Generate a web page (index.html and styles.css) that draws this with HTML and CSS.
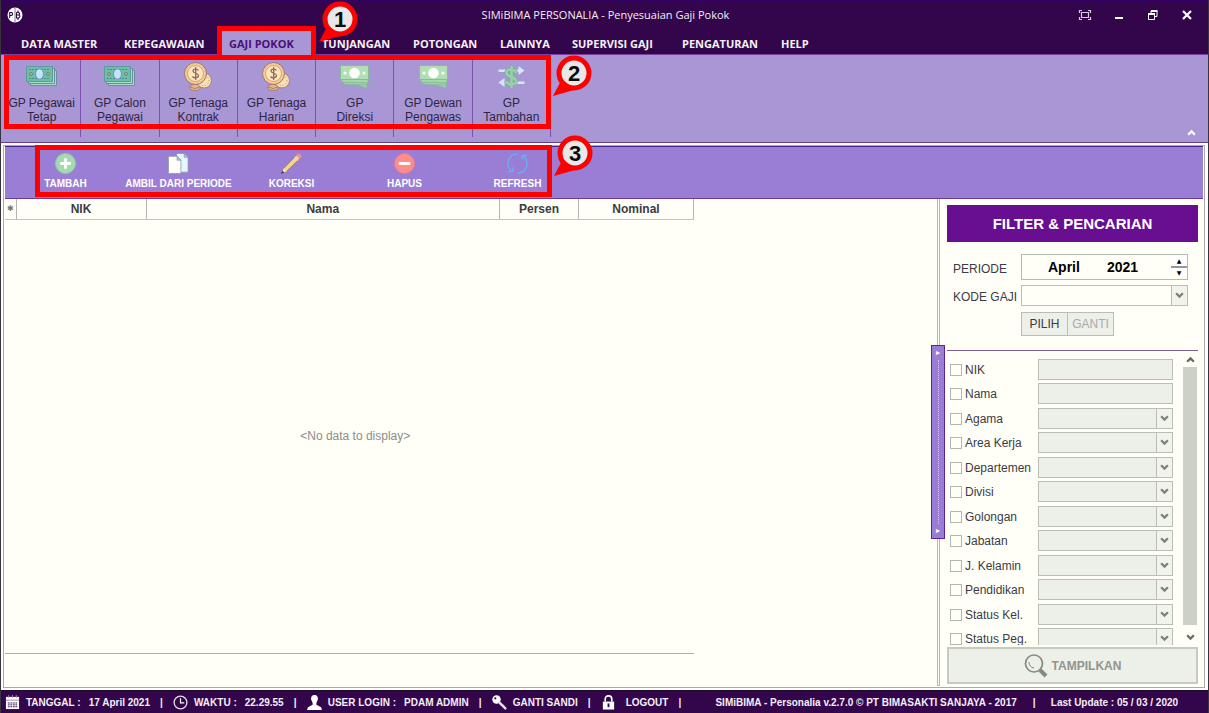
FILE: index.html
```html
<!DOCTYPE html>
<html lang="id">
<head>
<meta charset="utf-8">
<title>SIMiBIMA PERSONALIA - Penyesuaian Gaji Pokok</title>
<link rel="stylesheet" href="styles.css">
</head>
<body>
<svg class="defs" aria-hidden="true">
  <symbol id="chev" viewBox="0 0 8 6"><path d="M1 1l3 3 3-3" fill="none" stroke="currentColor" stroke-width="2"/></symbol>
  <symbol id="callout" viewBox="0 0 42 44"><path d="M1 42 10 25 22 36z" fill="#fe0000"/><circle cx="22" cy="19" r="15" fill="#e8e8e8" stroke="#fe0000" stroke-width="5"/><path d="M7 36 12 27 17 33z" fill="#fe0000"/></symbol>
  <symbol id="notes" viewBox="0 0 31 21">
    <g stroke="#6c8fa0" stroke-width="1"><path d="M4.500 4.500h26v15h-26z" fill="#a5dcc8"/><path d="M2.500 2.500h26v15h-26z" fill="#a5dcc8"/><path d="M.500.500h26v15h-26z" fill="#6bbfa9" stroke="#5f9c9f"/></g>
    <path d="M3 3.500h21M3 12.500h21" stroke="#4a8f90" stroke-dasharray="2 1"/>
    <ellipse cx="13.500" cy="8" rx="4" ry="5.200" fill="#c5e3fb" stroke="#7590bd"/>
    <circle cx="5" cy="8" r="1.500" fill="#e0ad77" stroke="#70807f"/><circle cx="22" cy="8" r="1.500" fill="#e0ad77" stroke="#70807f"/>
  </symbol>
  <symbol id="coins" viewBox="0 0 28 29">
    <ellipse cx="11" cy="25.500" rx="5.500" ry="3" fill="#e9bb86" stroke="#a87a74"/><path d="M6 25q5 3 10 0" fill="none" stroke="#a87a74"/>
    <circle cx="20" cy="18.500" r="7.500" fill="#fbe0b3" stroke="#a87a80"/><circle cx="20" cy="18.500" r="5" fill="none" stroke="#b68c79" stroke-dasharray="1 2"/>
    <circle cx="11.500" cy="11.500" r="11" fill="#f4cc91" stroke="#a0727e"/><circle cx="11.500" cy="11.500" r="8" fill="#fde6bd" stroke="#d6a376"/>
    <path d="M14.500 8.500c-1-2-5.500-2-5.500.500s5.500 2 5.500 4.500-4.500 3-6 1M11.700 5v13" fill="none" stroke="#94675f" stroke-width="1.300"/>
  </symbol>
  <symbol id="cash" viewBox="0 0 29 24">
    <g fill="#a6d8ad" stroke="#86bb98"><path d="M7 17l20-4v10z"/><path d="M3 14l24-3v9l-23-1z"/><path d="M1 11h27v7l-26-1z"/><path d="M.500.500h28v14h-28z" fill="#b0dfb6"/></g>
    <circle cx="14.500" cy="8" r="5.300" fill="#fffef8"/><circle cx="5" cy="8" r="1.600" fill="#fffef8"/><circle cx="24" cy="8" r="1.600" fill="#fffef8"/>
  </symbol>
  <symbol id="transfer" viewBox="0 0 28 24">
    <path d="M1 4.500h20V1l6 4.500-6 4.500V7H1zM27 16.500H7V13l-6 4.500L7 22v-3h20z" fill="#d3e8f7"/>
    <path d="M18.500 8c-1-5-10-4.500-9.500 0s9.500 3.500 9.500 8-9 4.500-10 0M14 1v22" fill="none" stroke="#7fa5a0" stroke-width="4"/><path d="M18.500 8c-1-5-10-4.500-9.500 0s9.500 3.500 9.500 8-9 4.500-10 0M14 1v22" fill="none" stroke="#95d3a6" stroke-width="2.600"/>
  </symbol>
</svg>

<header class="titlebar">
  <svg class="logo" viewBox="0 0 16 16"><circle cx="8" cy="8" r="7.500" fill="#fff"/><path d="M8 1v14" stroke="#8d72a0"/><path d="M2.700 11V5.500h2q1.700 1.500 0 3h-2M9.500 5.500v5.500h2q2.500-1.500.500-3H9.500M9.500 5.500h2q2 1 .500 2.500M11 3.500v2M11 11v2" fill="none" stroke="#33064b" stroke-width="1.100"/></svg>
  <h1>SIMiBIMA PERSONALIA - Penyesuaian Gaji Pokok</h1>
  <div class="winbtns">
    <button aria-label="Layar penuh"><svg viewBox="0 0 14 12"><path d="M4 1.500H1.500V4M10 1.500h2.500V4M4 10.500H1.500V8M10 10.500h2.500V8M3.500 3.500h7v5h-7z" fill="none" stroke="#d9c9e2" stroke-width="1.200"/></svg></button>
    <button aria-label="Kecilkan"><svg viewBox="0 0 14 12"><path d="M3 9h8" stroke="#fff" stroke-width="2"/></svg></button>
    <button aria-label="Pulihkan"><svg viewBox="0 0 14 12"><path d="M5 4V2h6v5.500h-2M2.500 5h6v5.500h-6z" fill="none" stroke="#fff"/><path d="M2 5h7M5 2h6.500" stroke="#fff" stroke-width="2"/></svg></button>
    <button aria-label="Tutup"><svg viewBox="0 0 14 12"><path d="M3 2l8 8M11 2l-8 8" stroke="#fff" stroke-width="2.200"/></svg></button>
  </div>
</header>

<nav class="menu">
  <a href="#">DATA MASTER</a>
  <a href="#">KEPEGAWAIAN</a>
  <a href="#" class="active">GAJI POKOK<svg class="callout c1" viewBox="0 0 42 44"><use href="#callout"/><text x="22" y="27">1</text></svg></a>
  <a href="#">TUNJANGAN</a>
  <a href="#">POTONGAN</a>
  <a href="#">LAINNYA</a>
  <a href="#">SUPERVISI GAJI</a>
  <a href="#">PENGATURAN</a>
  <a href="#">HELP</a>
</nav>

<section class="ribbon">
  <div class="ribbon-items">
    <button><svg class="i-notes"><use href="#notes"/></svg><span>GP Pegawai<br>Tetap</span></button>
    <button><svg class="i-notes"><use href="#notes"/></svg><span>GP Calon<br>Pegawai</span></button>
    <button><svg class="i-coins"><use href="#coins"/></svg><span>GP Tenaga<br>Kontrak</span></button>
    <button><svg class="i-coins"><use href="#coins"/></svg><span>GP Tenaga<br>Harian</span></button>
    <button><svg class="i-cash"><use href="#cash"/></svg><span>GP<br>Direksi</span></button>
    <button><svg class="i-cash"><use href="#cash"/></svg><span>GP Dewan<br>Pengawas</span></button>
    <button><svg class="i-cash"><use href="#transfer"/></svg><span>GP<br>Tambahan</span></button>
    <svg class="callout c2" viewBox="0 0 42 44"><use href="#callout"/><text x="22" y="27">2</text></svg>
  </div>
  <button class="collapse" aria-label="Ciutkan pita"><svg viewBox="0 0 8 6"><path d="M1 5l3-3 3 3" fill="none" stroke="#fff" stroke-width="2"/></svg></button>
</section>

<main class="window">
  <div class="toolbar">
    <div class="tools">
      <button><svg viewBox="0 0 24 24"><circle cx="12" cy="12" r="10.500" fill="#a5dab1" stroke="#90c6a5"/><path d="M12 6.500v11M6.500 12h11" stroke="#fff" stroke-width="3"/></svg><span>TAMBAH</span></button>
      <button><svg viewBox="0 0 24 24"><g stroke="#8797a6" stroke-width=".800"><path d="M10 1.500h8l4 4V21H10z" fill="#e7f5fd"/><path d="M18 1.500v4h4z" fill="#9ed5ea"/><path d="M1.500 4.500h9l4 4V22.500h-13z" fill="#fffef8"/><path d="M10.500 4.500v4h4z" fill="#9ed5ea"/></g></svg><span>AMBIL DARI PERIODE</span></button>
      <button><svg viewBox="0 0 24 24"><path d="M2 22l2-5L17.500 3l3.500 3.500L7 20z" fill="#f5d48b" stroke="#9d7755" stroke-width=".800"/><path d="M4 17l3 3-5 2z" fill="#f7e5c8"/><path d="M2.500 19.500l2 2-3.500 1.500z" fill="#473543"/><path d="M17 3.500l1.500-2q3.500-.500 4 3.500L20.500 7z" fill="#f0908f"/><path d="M15.500 5l3.500 3.500" stroke="#cfdcec" stroke-width="1.500"/></svg><span>KOREKSI</span></button>
      <button><svg viewBox="0 0 24 24"><circle cx="12" cy="12" r="10.500" fill="#ff8c8c" stroke="#e8798d"/><path d="M6 12h12" stroke="#fff" stroke-width="3"/></svg><span>HAPUS</span></button>
      <button><svg viewBox="0 0 24 24"><path d="M12.500 2C5 2 2 7 2 12q0 5 4.500 8.500M2 20.500h5V16M11.500 22C19 22 22 17 22 12q0-5-4.500-8.500M22 3.500h-5V8" fill="none" stroke="#69aef5" stroke-width="1.500"/></svg><span>REFRESH</span></button>
      <svg class="callout c3" viewBox="0 0 42 44"><use href="#callout"/><text x="22" y="27">3</text></svg>
    </div>
  </div>
  <div class="content">
    <section class="grid-area">
      <table>
        <colgroup><col class="w-mark"><col class="w-nik"><col><col class="w-persen"><col class="w-nominal"></colgroup>
        <thead><tr><th class="mark">✱</th><th>NIK</th><th>Nama</th><th>Persen</th><th>Nominal</th></tr></thead>
        <tbody><tr><td colspan="5">&lt;No data to display&gt;</td></tr></tbody>
      </table>
    </section>
    <div class="splitter"><button aria-label="Sembunyikan filter"><i>▸</i><b></b><i>▸</i></button></div>
    <aside class="filter">
      <h2>FILTER &amp; PENCARIAN</h2>
      <div class="period">
        <label for="bulan">PERIODE</label>
        <div class="spin"><input id="bulan" value="April"><input aria-label="Tahun" class="year" value="2021"><span class="arrows"><button aria-label="Naik">▲</button><button aria-label="Turun">▼</button></span></div>
        <label for="kode">KODE GAJI</label>
        <div class="combo open"><select id="kode"><option></option></select><svg><use href="#chev"/></svg></div>
        <div class="pair"><button>PILIH</button><button disabled>GANTI</button></div>
      </div>
      <div class="scroller">
        <ul>
          <li><input type="checkbox" id="c1"><label for="c1">NIK</label><input class="field" aria-label="NIK" disabled></li>
          <li><input type="checkbox" id="c2"><label for="c2">Nama</label><input class="field" aria-label="Nama" disabled></li>
          <li><input type="checkbox" id="c3"><label for="c3">Agama</label><div class="combo"><select aria-label="Agama" disabled></select><svg><use href="#chev"/></svg></div></li>
          <li><input type="checkbox" id="c4"><label for="c4">Area Kerja</label><div class="combo"><select aria-label="Area Kerja" disabled></select><svg><use href="#chev"/></svg></div></li>
          <li><input type="checkbox" id="c5"><label for="c5">Departemen</label><div class="combo"><select aria-label="Departemen" disabled></select><svg><use href="#chev"/></svg></div></li>
          <li><input type="checkbox" id="c6"><label for="c6">Divisi</label><div class="combo"><select aria-label="Divisi" disabled></select><svg><use href="#chev"/></svg></div></li>
          <li><input type="checkbox" id="c7"><label for="c7">Golongan</label><div class="combo"><select aria-label="Golongan" disabled></select><svg><use href="#chev"/></svg></div></li>
          <li><input type="checkbox" id="c8"><label for="c8">Jabatan</label><div class="combo"><select aria-label="Jabatan" disabled></select><svg><use href="#chev"/></svg></div></li>
          <li><input type="checkbox" id="c9"><label for="c9">J. Kelamin</label><div class="combo"><select aria-label="J. Kelamin" disabled></select><svg><use href="#chev"/></svg></div></li>
          <li><input type="checkbox" id="c10"><label for="c10">Pendidikan</label><div class="combo"><select aria-label="Pendidikan" disabled></select><svg><use href="#chev"/></svg></div></li>
          <li><input type="checkbox" id="c11"><label for="c11">Status Kel.</label><div class="combo"><select aria-label="Status Kel." disabled></select><svg><use href="#chev"/></svg></div></li>
          <li><input type="checkbox" id="c12"><label for="c12">Status Peg.</label><div class="combo"><select aria-label="Status Peg." disabled></select><svg><use href="#chev"/></svg></div></li>
        </ul>
        <div class="scrollbar"><svg class="up"><use href="#chev"/></svg><span></span><svg><use href="#chev"/></svg></div>
      </div>
      <button class="show" disabled><svg viewBox="0 0 24 24"><circle cx="10" cy="9.500" r="8.500" fill="none" stroke="#858a80" stroke-width="1.700"/><path d="M5 8q0 5 5 6" fill="none" stroke="#858a80"/><path d="M16 16l6 6" stroke="#858a80" stroke-width="4"/></svg>TAMPILKAN</button>
    </aside>
  </div>
</main>

<footer class="status">
  <span class="s s-date"><svg viewBox="0 0 16 16"><path d="M1 2h14v13H1z" fill="#fff"/><path d="M1 5.500h14M4 0v3M8 0v3M12 0v3" stroke="#9b86a6"/><path d="M3 8.500h10M3 10.500h10M3 12.500h10" stroke="#33064b" stroke-dasharray="2 .700"/></svg>TANGGAL :<span>17 April 2021</span></span><i>|</i>
  <span class="s s-time"><svg viewBox="0 0 16 16"><circle cx="8" cy="8" r="6.800" fill="none" stroke="#e6dcea" stroke-width="1.400"/><path d="M8 3.500V8.500h4" fill="none" stroke="#fff" stroke-width="1.300"/></svg>WAKTU :<span>22.29.55</span></span><i>|</i>
  <span class="s s-user"><svg viewBox="0 0 16 16"><path d="M8 0c3 0 4 2.500 3.500 5L10 8.500v2l5 2.500 1 3H0l1-3 5-2.500v-2L4.500 5C4 2.500 5 0 8 0z" fill="#fff"/></svg>USER LOGIN :<span>PDAM ADMIN</span></span><i>|</i>
  <a href="#" class="s s-key"><svg viewBox="0 0 16 16"><circle cx="4.800" cy="4.800" r="4.500" fill="#fff"/><circle cx="3.500" cy="3.500" r="1.200" fill="#33064b"/><path d="M7 7l8 8M11 13l2-2M8.500 10.500l1.500-1.500" stroke="#e8dff0" stroke-width="2.500"/></svg>GANTI SANDI</a><i>|</i>
  <a href="#" class="s s-lock"><svg viewBox="0 0 16 16"><path d="M4.500 7V4.500q0-3.500 3.500-3.500t3.500 3.500V7" fill="none" stroke="#fff" stroke-width="1.800"/><path d="M2 7h12v8.500H2z" fill="#fff"/><path d="M8 9v4" stroke="#33064b" stroke-width="2"/></svg>LOGOUT</a><i>|</i>
  <span class="about">SIMiBIMA - Personalia v.2.7.0 © PT BIMASAKTI SANJAYA - 2017</span><i>|</i>
  <span class="upd">Last Update : 05 / 03 / 2020</span>
</footer>
</body>
</html>
```
FILE: styles.css
```css
* { box-sizing: border-box; }
body {
  margin: 0;
  min-height: 100vh;
  display: flex;
  flex-direction: column;
  font-family: "Liberation Sans", Arial, sans-serif;
  font-size: 12px;
  color: #3c3b44;
  background: #fff;
  border-left: 1px solid #39333d;
  border-right: 1px solid #39333d;
}
button, input, select { font: inherit; color: inherit; margin: 0; padding: 0; border: 0; background: none; border-radius: 0; }
a { color: inherit; text-decoration: none; }
.defs { position: absolute; width: 0; height: 0; }

.titlebar {
  display: grid;
  grid-template-columns: 1fr auto 1fr;
  align-items: center;
  height: 28px;
  padding: 0 14px 0 6px;
  background: #33064b;
  border-top: 1px solid #320065;
  color: #f3ecf6;
}
.logo { width: 16px; height: 16px; }
.titlebar h1 { margin: 0 0 0 10px; font: 11px/16px "Open Sans", "Noto Sans", sans-serif; }
.winbtns { display: flex; justify-content: flex-end; gap: 20px; }
.winbtns button { width: 14px; height: 12px; display: flex; }
.winbtns svg { width: 14px; height: 12px; }

.menu {
  display: grid;
  grid-template-columns: 103px 105px 93px 91px 87px 72px 110px 99px 60px;
  height: 26px;
  padding-left: 20px;
  background: #33064b;
  color: #f6f0f8;
  font: bold 11px/32px "Open Sans", "Noto Sans", sans-serif;
  white-space: nowrap;
}
.menu a { position: relative; z-index: 2; }
.menu .active { z-index: 3; color: #4a1178; }
.menu .active::before {
  content: "";
  position: absolute;
  z-index: -1;
  inset: -2px 6px 0 -12px;
  border: 5px solid #fe0000;
  background: #a996d5;
}
.callout { position: absolute; z-index: 4; width: 42px; height: 44px; }
.callout text { font: bold 22px "Liberation Sans", Arial, sans-serif; text-anchor: middle; fill: #0c0c0c; }
.c1 { left: 89px; top: -28px; }
.c2 { right: -43px; top: -1px; }
.c3 { right: -43px; top: -13px; }

.ribbon {
  display: flex;
  justify-content: space-between;
  height: 89px;
  background: #a996d5;
  border-top: 1px solid #7a3f9f;
  border-bottom: 1px solid #61408a;
}
.ribbon-items {
  position: relative;
  display: grid;
  grid-template-columns: repeat(7, 1fr);
  width: 549px;
  margin: 0 0 5px 1px;
  padding-left: 1px;
}
.ribbon-items::before {
  content: "";
  position: absolute;
  inset: 0 0 8px 2px;
  border: 5px solid #fe0000;
}
.ribbon-items button {
  display: grid;
  grid-template-rows: 39px auto;
  align-content: start;
  justify-items: center;
  align-items: center;
  padding-top: 2px;
  border-right: 1px solid #7c4fb0;
  line-height: 14px;
  color: #2f2540;
}
.i-notes { width: 31px; height: 21px; }
.i-coins { width: 28px; height: 29px; }
.i-cash { width: 29px; height: 24px; }
.collapse { align-self: flex-end; margin: 0 12px 5px 0; height: 8px; display: flex; }
.collapse svg { width: 9px; height: 7px; }

.window {
  flex: 1;
  display: flex;
  flex-direction: column;
  margin: 2px 3px 2px 2px;
  border: 1px solid #a9aaa5;
  background: #fffff7;
}
.toolbar {
  height: 53px;
  margin: 0 1px;
  background: #9a7dd4;
  border-top: 1px solid #4d1f87;
  border-bottom: 1px solid #6a3b9d;
}
.tools {
  position: relative;
  display: grid;
  grid-template-columns: repeat(5, 113px);
  width: 547px;
  padding-left: 4px;
  height: 50px;
}
.tools::before { content: ""; position: absolute; inset: -2px 0 0 30px; border: 5px solid #fe0000; }
.tools button {
  display: flex;
  flex-direction: column;
  align-items: center;
  padding-top: 5px;
  color: #fff;
  font-weight: bold;
  font-size: 10px;
  line-height: 14px;
  white-space: nowrap;
}
.tools button svg { width: 23px; height: 23px; margin-bottom: 2px; }

.content { flex: 1; display: flex; }
.grid-area { flex: 1; display: flex; padding: 0 237px 33px 1px; }
.grid-area table {
  flex: 1;
  table-layout: fixed;
  border-collapse: collapse;
  border-bottom: 1px solid #b0b0aa;
}
.w-mark { width: 11px; }
.w-nik { width: 130px; }
.w-persen { width: 79px; }
.w-nominal { width: 115px; }
th { height: 20px; padding: 0; border-right: 1px solid #b4b5b0; border-bottom: 1px solid #c2c3bd; }
.mark { font: 8px "DejaVu Sans", sans-serif; color: #77776f; }
td { padding: 0 0 0 12px; text-align: center; color: #8c8c8c; }

.splitter { display: flex; align-items: center; width: 14px; flex: none; position: relative; padding-bottom: 3px; }
.splitter::before { content: ""; position: absolute; inset: 0 5px 1px 6px; border: 1px solid #b8b8b2; border-top: 0; }
.splitter button {
  position: relative;
  width: 14px;
  height: 194px;
  display: flex;
  flex-direction: column;
  align-items: center;
  background: #9a7dd4;
  border: 1px solid #5b2591;
  color: #fff;
}
.splitter i { font: 8px/14px "DejaVu Sans", sans-serif; }
.splitter b { flex: 1; border-left: 1px dotted #d5c8ee; }

.filter { width: 251px; flex: none; display: flex; flex-direction: column; margin: 6px 6px 3px 2px; }
.filter h2 { margin: 0; background: #670e91; color: #fff; text-align: center; font-size: 15px; line-height: 37px; }
.period {
  display: grid;
  grid-template-columns: 68px 167px;
  row-gap: 5px;
  padding: 12px 0 14px 6px;
  border-bottom: 1px solid #7d5f92;
  align-items: center;
}
.period label { white-space: nowrap; padding-top: 3px; }
.spin { display: flex; align-items: center; height: 26px; border: 1px solid #b6bbb0; font-weight: bold; font-size: 14px; color: #000; }
.spin input { width: 60px; padding-left: 26px; height: 20px; }
.spin .year { padding-left: 25px; width: 70px; }
.arrows { display: grid; gap: 2px; margin-left: auto; width: 16px; background: #989890; }
.arrows button { height: 10px; font: 6px/10px "DejaVu Sans", sans-serif; background: #fff; }
.combo { position: relative; height: 21px; }
.combo select { appearance: none; width: 100%; height: 100%; border: 1px solid #b9bfb4; background: #edf0e8; opacity: 1; }
.open select { background: #fffff7; }
.combo svg { position: absolute; inset: 1px 1px 1px auto; width: 16px; height: 19px; padding: 6px 3px; border-left: 1px solid #b9bfb4; background: #f2f4ec; color: #7c8176; pointer-events: none; }
.pair { grid-column: 2; display: flex; margin-top: 1px; }
.pair button { height: 24px; width: 47px; border: 1px solid #b9bfb4; background: #edf0e8; }
.pair button + button { margin-left: -1px; color: #aaa9ad; }

.scroller { flex: 1 1 0; min-height: 0; display: flex; justify-content: space-between; overflow: hidden; }
.scroller ul { list-style: none; margin: 0; padding: 8px 0 0 3px; width: 226px; }
.scroller li { display: grid; grid-template-columns: 15px 73px 135px; height: 21px; margin-bottom: 3px; align-items: center; }
.scroller li:nth-child(even) { margin-bottom: 4px; }
.scroller label { white-space: nowrap; }
.scroller [type="checkbox"] { appearance: none; width: 12px; height: 12px; border: 1px solid #b3b8ad; background: #fffff7; }
.field { width: 100%; height: 21px; border: 1px solid #b9bfb4; background: #edf0e8; }
.scrollbar { display: flex; flex-direction: column; align-items: center; width: 16px; padding: 5px 0 4px; color: #666a60; }
.scrollbar span { flex: 1; width: 14px; background: #ccd0c6; margin: 4px 0 9px; }
.scrollbar svg { width: 9px; height: 7px; flex: none; }
.scrollbar .up { transform: rotate(180deg); }
.show {
  display: flex;
  justify-content: center;
  align-items: center;
  gap: 4px;
  height: 37px;
  margin-top: 2px;
  border: 2px solid #c6cbc0;
  background: #edf0e8;
  color: #92948f;
  font-weight: bold;
}
.show svg { width: 24px; height: 24px; }

.status {
  display: flex;
  align-items: center;
  height: 23px;
  padding: 0 4px;
  background: #33064b;
  border-top: 1px solid #1f0a30;
  color: #f4eef7;
  font-weight: bold;
  font-size: 10px;
  white-space: nowrap;
}
.status i { font-style: normal; width: 2px; margin: 0 11px 0 10px; }
.s { display: flex; align-items: center; gap: 6px; }
.s svg { width: 15px; height: 15px; }
.s span { margin-left: 2px; }
.s-lock { gap: 10px; }
.about { margin-left: 24px; }
.about + i { margin: 0 16px; }
```
